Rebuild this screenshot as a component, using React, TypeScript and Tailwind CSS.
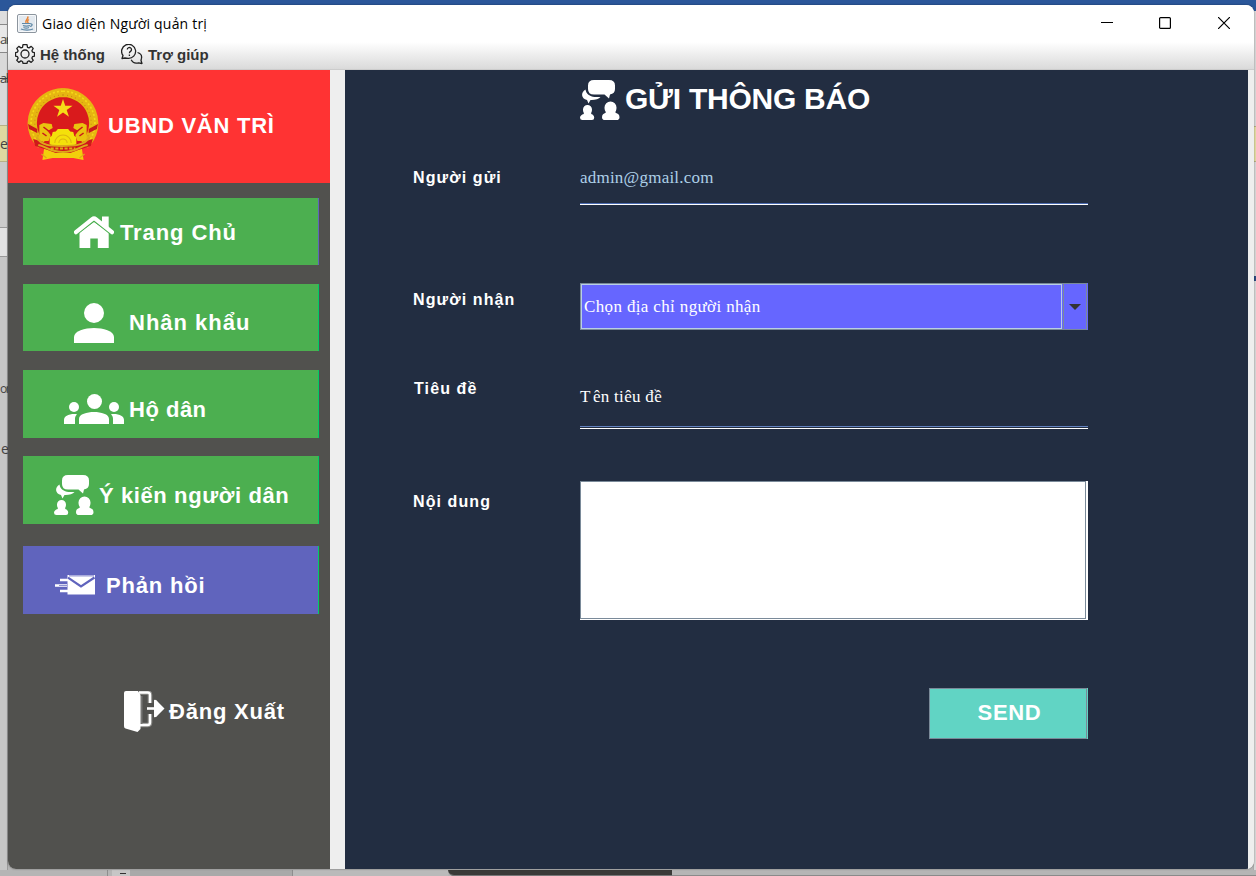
import React from "react";

const sans = "font-['Liberation_Sans',Arial,sans-serif]";
const serif = "font-['Liberation_Serif','Times_New_Roman',serif]";

function JavaIcon() {
  return (
    <svg width="20" height="19" viewBox="0 0 20 19" className="shrink-0">
      <rect x="0.5" y="0.5" width="19" height="18" rx="1.5" fill="#e3e9ef" stroke="#8c959e" />
      <rect x="1.5" y="1.5" width="17" height="16" rx="1" fill="none" stroke="#f7f9fb" />
      <path d="M10.5 2.5c2 2-3 3.500-1.500 6.500M12 5.500c-1.500 1-2 2-.7 3.800" fill="none" stroke="#e8863a" strokeWidth="1.500" />
      <path d="M5 9.500h8.500M6 11.500c1 .7 5.500.7 7 0M13.500 10c2.500-.5 2 2.200-.5 2.500M6.500 13.500c1.500.6 4 .6 5.500 0M4 15c3 1.400 9 1.400 12 0" fill="none" stroke="#5f88a6" strokeWidth="1.200" />
    </svg>
  );
}

function GearIcon() {
  return (
    <svg width="20" height="20" viewBox="0 0 20 20" fill="none" stroke="#222" strokeWidth="1.300" strokeLinejoin="round" className="shrink-0">
      <path d="M8 .7h4l.5 2.600 1.500.6 2.200-1.500 2 2-1.300 2.300.6 1.400 2 .5v3.600l-2 .5-.6 1.400 1.300 2.300-2 2-2.200-1.500-1.500.6-.5 1.900H8l-.5-1.900-1.500-.6-2.200 1.500-2-2 1.300-2.300-.6-1.400-2-.5V8.600l2-.5.6-1.400-1.300-2.300 2-2L6 3.900l1.500-.6z" />
      <circle cx="10" cy="10" r="4" />
    </svg>
  );
}

function HelpIcon() {
  return (
    <svg width="22" height="21" viewBox="0 0 22 21" fill="none" stroke="#222" strokeWidth="1.300" strokeLinejoin="round" className="shrink-0">
      <path d="M1 14.500l1-3A7 7 0 1 1 7 14.300L4 14z" />
      <path d="M6.300 5.600a2.100 2.100 0 1 1 3.200 1.800c-.8.500-1.100.8-1.100 1.900M8.400 10.600v1.300" />
      <path d="M16.500 8.500c2.800.8 4.500 3 4 5.700l-.5 2.300 1 3-3.500-.7c-3 .8-6-.3-7.300-3" />
    </svg>
  );
}

function Emblem() {
  return (
    <svg width="72" height="73" viewBox="0 0 70 73" preserveAspectRatio="none" className="shrink-0">
      <path d="M17 58h36l2 14-10-2H25l-10 2z" fill="#f2cf0c" />
      <circle cx="35" cy="34" r="30.500" fill="#d91a1c" />
      <path d="M35 4.500a30.500 30.500 0 0 0-21 52M35 4.500a30.500 30.500 0 0 1 21 52" fill="none" stroke="#e6b611" strokeWidth="9" />
      <path d="M35 3.200a31.800 31.800 0 0 0-22 54M35 3.200a31.800 31.800 0 0 1 22 54" fill="none" stroke="#f5d817" strokeWidth="1.600" strokeDasharray="2 2" />
      <path d="M35 7a28 28 0 0 0-19 48M35 7a28 28 0 0 1 19 48" fill="none" stroke="#c98b15" strokeWidth="1" strokeDasharray="1 3" />
      <path d="m35 11 2.200 6.800h7.100l-5.700 4.100 2.200 6.800-5.800-4.200-5.800 4.200 2.200-6.800-5.700-4.100h7.100z" fill="#f6dc18" />
      <path d="M1 36l9 5v4l-8-4zM69 36l-9 5v4l8-4z" fill="#c9171b" />
      <path d="M12 37l4-2 8 1 1 4-5 3 3 4-2 6h-9zM58 37l-4-2-8 1-1 4 5 3-3 4 2 6h9z" fill="#e9c30f" />
      <path d="M16 39l5 4M54 39l-5 4M15 45l4 3M55 45l-4 3" stroke="#c9171b" strokeWidth="1.500" />
      <path d="M22 57v-8l2-1 1-4 3-.5 2-2.500h10l2 2.500 3 .5 1 4 2 1v8z" fill="#f4e00b" />
      <path d="M27 55a8 8 0 0 1 16 0M31 55a4 4 0 0 1 8 0" fill="none" stroke="#dcb410" strokeWidth="1" />
      <path d="M6 51l10 3 8 3h22l8-3 10-3-2 7-12 4-8 3H28l-8-3-12-4z" fill="#cf181b" />
      <path d="M9 49c5 9 15 9 25 9s22 0 27-9M11 57c7 1 12 7 24 7s17-6 24-7" fill="none" stroke="#dda819" strokeWidth="2" />
      <path d="M23 60.500h24" stroke="#e0ad14" strokeWidth="2" strokeDasharray="3 1.500" />
      <path d="M14 66l5 4M56 66l-5 4" stroke="#dda819" />
    </svg>
  );
}

function HomeIcon() {
  return (
    <svg width="40" height="33" viewBox="0 0 40 33" fill="#fff" className="shrink-0">
      <path d="M20 6 34.700 16.500V32H23.800v-9.500h-7.500V32H5.500V16.500z" />
      <path d="M2 16.200 18.300 3.200q1.700-1.400 3.400 0L38 16.200" fill="none" stroke="#4caf50" strokeWidth="6.200" />
      <path d="M2 16.200 18.300 3.200q1.700-1.400 3.400 0L38 16.200" fill="none" stroke="#fff" strokeWidth="4.200" strokeLinecap="round" />
      <path d="M28 .5h6.700v12.200L28 7z" />
    </svg>
  );
}

function PersonIcon() {
  return (
    <svg width="40" height="40" viewBox="0 0 40 40" fill="#fff" className="shrink-0">
      <circle cx="20" cy="10" r="10" />
      <path d="M0 40v-6c0-6 11-9 20-9s20 3 20 9v6z" />
    </svg>
  );
}

function GroupIcon() {
  return (
    <svg width="60" height="30" viewBox="0 0 60 30" fill="#fff" className="shrink-0">
      <circle cx="30.500" cy="7.500" r="7.500" />
      <circle cx="10" cy="13" r="5" />
      <circle cx="50" cy="13" r="5" />
      <path d="M15 30v-5c0-5 8-7 15-7s15 2 15 7v5zM0 30v-4c0-4 5-6.500 13-5.800-1.500 1.500-2 3-2 4.800v5zM60 30v-4c0-4-5-6.500-13-5.800 1.500 1.500 2 3 2 4.800v5z" />
    </svg>
  );
}

function TalkIcon() {
  return (
    <svg width="40" height="41" viewBox="0 0 40 41" fill="#fff" className="shrink-0">
      <path d="M14 0h15q6 0 6 5.500v3.500q0 4.500-5 5.500l-1 4-4.500-4H14Q8 14.500 8 9V5.500Q8 0 14 0z" />
      <path d="M5.500 9.500C6 14 10 16.500 14.500 17h6c-1.500 2-5 3-9 3l-1 0L8.500 23.500 7 20C1 18.500.5 12.500 5.500 9.500z" />
      <path d="M7.500 25a4.500 4.500 0 0 1 4.500 4.500c0 1.500-.4 2.700-.8 3.300v1.200c2 .7 3 1.800 3 3.700Q14.200 40 12 40H2.500Q0 40 0 37.700c0-1.900 1.500-3 3.800-3.700v-1.200c-.5-.6-.8-1.800-.8-3.300A4.500 4.500 0 0 1 7.500 25z" />
      <path d="M30.500 21.500a6 6 0 0 1 6 6c0 1.800-.4 3.300-1 4.300v.9c2.500.7 4 2 4 4.500Q39.500 40 36.500 40h-11.500Q22 40 22 37.200c0-2.500 1.500-3.800 3.700-4.500v-.9c-.7-1-1.200-2.500-1.200-4.300a6 6 0 0 1 6-6z" />
    </svg>
  );
}

function MailIcon() {
  return (
    <svg width="41" height="20" viewBox="0 0 41 20" className="shrink-0">
      <path d="M12.500 0H40v19.500H12.500z" fill="#fff" />
      <path d="M14 0h25v1.600H14z" fill="#a9abdc" />
      <path d="M13 2.600 26 11.500 39.500 2.500" fill="none" stroke="#6064bd" strokeWidth="2.200" />
      <path d="M5 5h8M0 10.500h12M5 16h8" stroke="#fff" strokeWidth="2.600" />
      <path d="M4 10.500h8" stroke="#6064bd" strokeWidth=".7" />
    </svg>
  );
}

function LogoutIcon() {
  return (
    <svg width="41" height="41" viewBox="0 0 41 41" className="shrink-0">
      <path d="M15 1.500h8.500q2.500 0 2.500 2.500v8M26 23v8.500q0 2.500-2.500 2.500h-7.500" fill="none" stroke="#8a8a87" strokeWidth="4.600" />
      <path d="M15 1.500h8.500q2.500 0 2.500 2.500v8M26 23v8.500q0 2.500-2.500 2.500h-7.500" fill="none" stroke="#fff" strokeWidth="2.400" />
      <path d="M16 5h2.500v28H16z" fill="#767674" />
      <path d="M2 0h12l2.500 4v34l-3 3-12-3.500Q0 37 0 35V2q0-2 2-2z" fill="#fff" />
      <path d="M23 17.500h9" stroke="#fff" strokeWidth="2.600" />
      <path d="M30 9q2-1 4 2l6.500 6.500L34 24q-2 3-4 2z" fill="#fff" />
    </svg>
  );
}

type NavItem = {
  label: string;
  icon: React.ReactNode;
  box: string;
  iconBox: string;
  textBox: string;
};

const navItems: NavItem[] = [
  { label: "Trang Chủ", icon: <HomeIcon />, box: "mt-[15px] h-[67px] bg-[#4caf50] border-[#6064bd] pl-[51px]", iconBox: "mt-[18px]", textBox: "mt-[21px] ml-[6px] tracking-[0.9px]" },
  { label: "Nhân khẩu", icon: <PersonIcon />, box: "mt-[19px] h-[67px] bg-[#4caf50] border-[#00cc66] pl-[51px]", iconBox: "mt-[19px]", textBox: "mt-[25px] ml-[15px] tracking-[1px]" },
  { label: "Hộ dân", icon: <GroupIcon />, box: "mt-[19px] h-[68px] bg-[#4caf50] border-[#00cc66] pl-[41px]", iconBox: "mt-[24px]", textBox: "mt-[26px] ml-[5px] tracking-[0.5px]" },
  { label: "Ý kiến người dân", icon: <TalkIcon />, box: "mt-[18px] h-[68px] bg-[#4caf50] border-[#00cc66] pl-[31px]", iconBox: "mt-[19px]", textBox: "mt-[26px] ml-[5px] tracking-[0.6px]" },
  { label: "Phản hồi", icon: <MailIcon />, box: "mt-[22px] h-[68px] bg-[#6064bd] border-[#00cc66] pl-[32px]", iconBox: "mt-[29px]", textBox: "mt-[26px] ml-[10px] tracking-[0.8px]" },
];

function Sidebar() {
  return (
    <aside className="flex w-[322px] shrink-0 flex-col bg-[#51514e]">
      <div className="flex h-[113px] shrink-0 bg-[#ff3333] pt-[18px] pl-[19px]">
        <Emblem />
        <div className="mt-[24px] ml-[9px] text-[22px] leading-[28px] font-bold tracking-[0.75px] whitespace-nowrap text-white">UBND VĂN TRÌ</div>
      </div>
      <nav className="flex flex-col pl-[15px]">
        {navItems.map((item) => (
          <button key={item.label} className={`flex w-[296px] items-start border-r text-white ${item.box}`}>
            <span className={item.iconBox}>{item.icon}</span>
            <span className={`text-[22px] leading-[28px] font-bold whitespace-nowrap ${item.textBox}`}>{item.label}</span>
          </button>
        ))}
      </nav>
      <button className="mt-[77px] ml-[116px] flex items-start text-white">
        <LogoutIcon />
        <span className="mt-[7px] ml-[4px] text-[22px] leading-[28px] font-bold tracking-[0.8px] whitespace-nowrap">Đăng Xuất</span>
      </button>
    </aside>
  );
}

function Label({ children, className }: { children: React.ReactNode; className: string }) {
  return <div className={`w-[167px] shrink-0 text-[16px] leading-[24px] font-bold tracking-[1.1px] whitespace-nowrap text-white ${className}`}>{children}</div>;
}

function NotificationForm() {
  return (
    <main className="flex w-[903px] shrink-0 flex-col bg-[#222d41] pl-[68px]">
      <header className="flex h-[95px] shrink-0 pt-[10px] pl-[167px] text-white">
        <TalkIcon />
        <h1 className="ml-[5px] text-[30px] leading-[38px] font-bold tracking-[-0.25px] whitespace-nowrap">GỬI THÔNG BÁO</h1>
      </header>
      <div className="flex h-[118px] shrink-0">
        <Label className="pt-px">Người gửi</Label>
        <div className={`flex h-[40px] w-[508px] flex-col justify-between text-[17px] leading-[26px] tracking-[0.22px] text-[#aed0e8] ${serif}`}>
          <span>admin@gmail.com</span>
          <div className="h-[2px] border-t border-b border-t-[#4a6ab0] border-b-white" />
        </div>
      </div>
      <div className="flex h-[93px] shrink-0">
        <Label className="mt-[5px]">Người nhận</Label>
        <div className="flex h-[47px] w-[508px] border-r border-[#6666ff]">
          <div className="flex h-[47px] w-[507px] border border-[#7a8a99] bg-[#6666ff]">
            <div className={`flex w-[481px] items-center border border-[#b8cfe5] pl-[2px] text-[17px] tracking-[0.36px] text-white ${serif}`}>Chọn địa chỉ người nhận</div>
            <div className="ml-px flex w-[23px] items-center justify-center border-l border-[#7a8a99]">
              <svg width="12" height="6" viewBox="0 0 12 6"><path d="M0 0h12L6 6z" fill="#333" /></svg>
            </div>
          </div>
        </div>
      </div>
      <div className="flex h-[105px] shrink-0">
        <Label className="pt-px pl-px">Tiêu đề</Label>
        <div className={`flex h-[53px] w-[508px] flex-col justify-between pt-[8px] text-[17px] leading-[26px] tracking-[0.3px] text-white ${serif}`}>
          <span><span className="tracking-[2.5px]">T</span>ên tiêu đề</span>
          <div className="h-[3px] border-t border-b border-t-[#6382bf] border-b-white" />
        </div>
      </div>
      <div className="flex h-[207px] shrink-0">
        <Label className="mt-[9px]">Nội dung</Label>
        <div className="h-[139px] w-[508px] border-r-2 border-b border-white bg-white">
          <div className="h-[138px] w-[506px] border border-[#7a8a99] bg-white" />
        </div>
      </div>
      <button className="ml-[516px] flex h-[51px] w-[159px] border-r border-[#61d4c4] bg-[#61d4c4]">
        <span className="flex h-[51px] w-[158px] justify-center border border-[#7a8a99] pt-[10px] pl-[3px] text-[22px] leading-[28px] font-bold tracking-[0.7px] text-white">SEND</span>
      </button>
    </main>
  );
}

function Backdrop() {
  return (
    <div className="flex h-full w-full flex-col bg-[#b5b5b5] font-['Open_Sans',sans-serif] text-[14px] text-[#444]">
      <div className="h-[11px] shrink-0 bg-[#2b579a]" />
      <div className="flex h-[859px] shrink-0 justify-between">
        <div className="flex w-[8px] flex-col border-r border-[#9a9a9a] bg-[#c6c6c6] leading-[20px] tracking-[-1.5px]">
          <div className="h-[13px] shrink-0 bg-[#dedede]" />
          <div className="flex h-[29px] shrink-0 items-center border-y border-[#888] bg-[#e8e8e8] text-[13px]">ar</div>
          <div className="flex h-[72px] shrink-0 items-start bg-[#d9d9d9] pt-[15px] text-[13px] line-through">ab</div>
          <div className="flex h-[37px] shrink-0 items-center border-y border-[#b7b187] bg-[#ded9a0]">e</div>
          <div className="h-[65px] shrink-0 bg-[#cbcbcb]" />
          <div className="h-[30px] shrink-0 border-y border-[#999] bg-[#e2e2e2]" />
          <div className="mt-[121px] flex h-[22px] shrink-0 items-center text-[12px]">or</div>
          <div className="mt-[38px] flex h-[22px] shrink-0 items-center pl-px">e</div>
        </div>
        <div className="flex w-[3px] flex-col border-l border-[#aaa] bg-[#d8d8d8]">
          <div className="mt-[115px] h-[36px] border-y border-[#b7b187] bg-[#e3dda4]" />
          <div className="mt-[114px] h-[5px] bg-[#2b4a80]" />
        </div>
      </div>
      <div className="flex h-[6px] shrink-0">
        <div className="w-[108px] border-r border-[#8e8e8e]" />
        <div className="ml-[4px] flex w-[18px] items-center justify-center bg-[#c6c6c6] pl-[3px]"><div className="h-px w-[6px] bg-[#333]" /></div>
        <div className="w-[163px] border-r border-[#8e8e8e] bg-[#a9a9a9]" />
        <div className="w-[155px] bg-[#bababa]" />
        <div className="w-[224px] rounded-bl-[6px] border-b border-[#777] bg-[#3a3a38]" />
        <div className="flex-1 border-b border-[#8a8a8a]" />
      </div>
    </div>
  );
}

export default function App() {
  return (
    <div className={`relative h-[876px] w-[1256px] overflow-hidden ${sans}`}>
      <Backdrop />
      <div className="absolute top-[5px] left-[8px] flex h-[864px] w-[1246px] flex-col overflow-hidden rounded-[8px] bg-[#ededed] shadow-[0_0_2px_rgba(0,0,0,0.45)]">
        <div className="flex h-[37px] shrink-0 items-center bg-white pl-[9px] font-['Open_Sans','Noto_Sans',sans-serif] text-[14px] text-black">
          <JavaIcon />
          <span className="ml-[5px] tracking-[0.2px] whitespace-nowrap">Giao diện Người quản trị</span>
          <div className="ml-auto flex items-center pr-[24px] pb-[2px]">
            <svg width="12" height="12" viewBox="0 0 12 12"><path d="M0 5.500h12" stroke="#000" /></svg>
            <svg width="12" height="12" viewBox="0 0 12 12" className="ml-[46px]"><rect x=".6" y=".6" width="10.800" height="10.800" rx="1" fill="none" stroke="#000" strokeWidth="1.200" /></svg>
            <svg width="12" height="12" viewBox="0 0 12 12" className="ml-[47px]"><path d="m0 0 12 12M12 0 0 12" stroke="#000" strokeWidth="1.200" /></svg>
          </div>
        </div>
        <div className="flex h-[28px] shrink-0 items-start border-b border-[#ccc] bg-linear-to-b from-white to-[#dadada] pt-[2px] pl-[7px] text-[15px] leading-[22px] font-bold text-[#333]">
          <GearIcon />
          <span className="ml-[5px] whitespace-nowrap">Hệ thống</span>
          <span className="ml-[16px] flex"><HelpIcon /></span>
          <span className="ml-[5px] whitespace-nowrap">Trợ giúp</span>
        </div>
        <div className="flex h-[799px]">
          <Sidebar />
          <div className="w-[15px] shrink-0 bg-[#eee]" />
          <NotificationForm />
          <div className="flex-1 bg-[#eee]" />
        </div>
      </div>
    </div>
  );
}
